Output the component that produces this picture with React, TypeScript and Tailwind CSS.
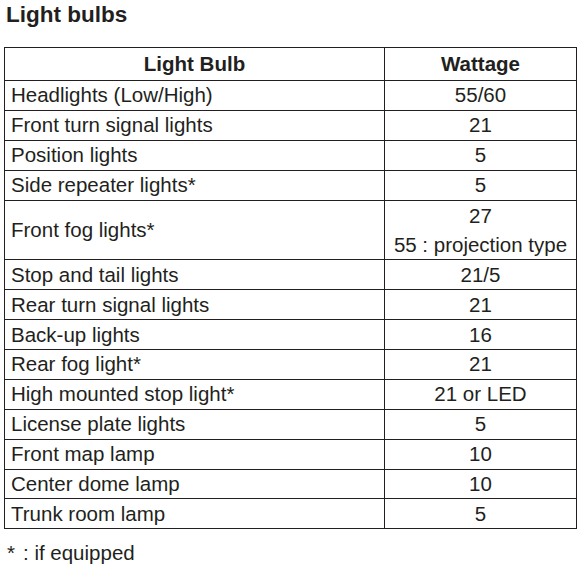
import React from 'react';

type Row = { bulb: string; watt: string[] };

const rows: Row[] = [
  { bulb: 'Headlights (Low/High)', watt: ['55/60'] },
  { bulb: 'Front turn signal lights', watt: ['21'] },
  { bulb: 'Position lights', watt: ['5'] },
  { bulb: 'Side repeater lights*', watt: ['5'] },
  { bulb: 'Front fog lights*', watt: ['27', '55 : projection type'] },
  { bulb: 'Stop and tail lights', watt: ['21/5'] },
  { bulb: 'Rear turn signal lights', watt: ['21'] },
  { bulb: 'Back-up lights', watt: ['16'] },
  { bulb: 'Rear fog light*', watt: ['21'] },
  { bulb: 'High mounted stop light*', watt: ['21 or LED'] },
  { bulb: 'License plate lights', watt: ['5'] },
  { bulb: 'Front map lamp', watt: ['10'] },
  { bulb: 'Center dome lamp', watt: ['10'] },
  { bulb: 'Trunk room lamp', watt: ['5'] },
];

export default function App() {
  return (
    <div
      className="w-[583px] h-[570px] bg-white text-[#231f20] overflow-hidden"
      style={{ fontFamily: '"Liberation Sans", Arial, sans-serif' }}
    >
      {/* titre */}
      <h1 className="pl-[6px] pt-[2px] text-[22.5px] leading-[26px] font-bold">Light bulbs</h1>

      <table className="ml-[4px] mt-[18.5px] w-[573px] border-collapse text-[20.5px]">
        <thead>
          <tr className="h-[33.5px]">
            <th className="w-[380px] border border-[#231f20] font-bold text-center p-0 leading-[24px]">
              Light Bulb
            </th>
            <th className="border border-[#231f20] font-bold text-center p-0 leading-[24px]">Wattage</th>
          </tr>
        </thead>
        <tbody>
          {rows.map((r) => (
            <tr key={r.bulb} className={r.watt.length > 1 ? 'h-[59.8px]' : 'h-[29.9px]'}>
              <td className="border border-[#231f20] pl-[6px] py-0 leading-[24px] align-middle">{r.bulb}</td>
              <td className="border border-[#231f20] text-center p-0 align-middle">
                {r.watt.map((w) => (
                  <div key={w} className={r.watt.length > 1 ? 'leading-[29px]' : 'leading-[24px]'}>
                    {w}
                  </div>
                ))}
              </td>
            </tr>
          ))}
        </tbody>
      </table>

      <p className="pl-[7px] mt-[12px] text-[20.5px] leading-[24px]">
        <span className="mr-[8px]">*</span>: if equipped
      </p>
    </div>
  );
}
